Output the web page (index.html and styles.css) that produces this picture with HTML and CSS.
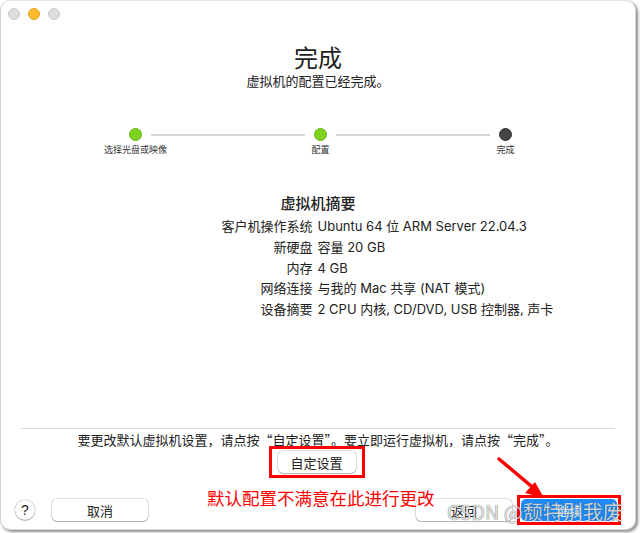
FILE: index.html
```html
<!DOCTYPE html>
<html lang="zh-CN">
<head>
    <meta charset="UTF-8" />
    <meta name="viewport" content="width=device-width, initial-scale=1.0" />
    <title>完成 - 虚拟机助理</title>
    <link rel="stylesheet" href="styles.css">
</head>
<body>
    <div class="window">
        <div class="titlebar">
            <span class="light"></span>
            <span class="light light-min"></span>
            <span class="light"></span>
        </div>

        <div class="header">
            <h1>完成</h1>
            <p>虚拟机的配置已经完成。</p>
        </div>

        <div class="steps">
            <span class="dot done"></span>
            <span class="line"></span>
            <span class="dot done"></span>
            <span class="line"></span>
            <span class="dot current"></span>
            <span class="step-label">选择光盘或映像</span>
            <span></span>
            <span class="step-label">配置</span>
            <span></span>
            <span class="step-label">完成</span>
        </div>

        <div class="summary">
            <h2>虚拟机摘要</h2>
            <dl>
                <dt>客户机操作系统</dt>
                <dd>Ubuntu 64 位 ARM Server 22.04.3</dd>
                <dt>新硬盘</dt>
                <dd>容量 20 GB</dd>
                <dt>内存</dt>
                <dd>4 GB</dd>
                <dt>网络连接</dt>
                <dd>与我的 Mac 共享 (NAT 模式)</dd>
                <dt>设备摘要</dt>
                <dd>2 CPU 内核, CD/DVD, USB 控制器, 声卡</dd>
            </dl>
        </div>

        <div class="footer">
            <p class="hint">要更改默认虚拟机设置，请点按“自定设置”。要立即运行虚拟机，请点按“完成”。</p>
            <div class="custom-row">
                <span class="mark">
                    <button class="btn btn-custom">自定设置</button>
                </span>
            </div>
            <div class="actions">
                <button class="help">?</button>
                <button class="btn btn-wide">取消</button>
                <span class="spacer"></span>
                <button class="btn btn-wide">返回</button>
                <span class="mark mark-primary">
                    <button class="btn btn-primary">继续</button>
                </span>
            </div>
        </div>

        <!-- annotations drawn over the screenshot -->
        <span class="note">默认配置不满意在此进行更改</span>
        <svg class="arrow" width="60" height="50" viewBox="0 0 60 50">
            <line x1="2" y1="2" x2="40" y2="34" stroke="#f00" stroke-width="3.5" stroke-linecap="round" />
            <polygon points="47,41 28,36 38,25" fill="#f00" />
        </svg>
        <span class="watermark">CSDN @颓特别我废</span>
    </div>
</body>
</html>
```

FILE: styles.css
```css
* {
    margin: 0;
    padding: 0;
    box-sizing: border-box;
}

body {
    background-color: #fff;
    font-family: "Liberation Sans", "Noto Sans CJK SC", sans-serif;
    color: #222;
    width: 640px;
    height: 533px;
}

.window {
    position: relative;
    width: 636px;
    height: 530px;
    background-color: #fff;
    border: 1px solid #d4d4d4;
    border-top-color: #e2e2e2;
    border-radius: 10px;
    box-shadow: 2px 2px 3px rgba(0, 0, 0, 0.45);
    display: flex;
    flex-direction: column;
}

.titlebar {
    display: flex;
    gap: 8px;
    padding: 7px 0 0 7px;
    height: 28px;
}

.light {
    width: 12px;
    height: 12px;
    border-radius: 50%;
    background-color: #dedede;
    border: 1px solid #cacaca;
}

.light-min {
    background-color: #fdbc2e;
    border-color: #e3a12a;
}

.header {
    text-align: center;
}

h1 {
    font-family: "Noto Sans CJK SC", sans-serif;
    font-size: 24px;
    font-weight: 400;
    line-height: 28px;
    margin-top: 14px;
    color: #1e1e1e;
}

.header p {
    font-family: "Noto Sans CJK SC", sans-serif;
    font-size: 13px;
    line-height: 20px;
    margin-top: 0;
}

.steps {
    display: grid;
    grid-template-columns: 13px 1fr 13px 1fr 13px;
    grid-template-rows: 13px auto;
    align-items: center;
    width: 383px;
    margin: 37px 0 0 128px;
}

.dot {
    width: 13px;
    height: 13px;
    border-radius: 50%;
}

.done {
    background-color: #7ed321;
    border: 1px solid #6ab31a;
}

.current {
    background-color: #454545;
    border: 1px solid #333;
}

.line {
    height: 2px;
    margin: 0 9px;
    background-color: #d4d4d4;
}

.step-label {
    justify-self: center;
    white-space: nowrap;
    font-family: "Noto Sans CJK SC", sans-serif;
    font-size: 9px;
    line-height: 12px;
    margin-top: 3px;
    color: #333;
}

.summary {
    margin-top: 37px;
}

h2 {
    text-align: center;
    font-family: "Noto Sans CJK SC", sans-serif;
    font-size: 15px;
    font-weight: 500;
    line-height: 20px;
    color: #222;
}

dl {
    display: grid;
    grid-template-columns: 1fr 1fr;
    column-gap: 5px;
    padding-right: 6px;
    margin-top: 3px;
    font-family: "Inter", "Noto Sans CJK SC", sans-serif;
    font-size: 13px;
    line-height: 20.8px;
}

dt {
    text-align: right;
}

.footer {
    margin: auto 20px 0;
    border-top: 1px solid #dcdcdc;
    padding-bottom: 4px;
}

.hint {
    text-align: center;
    font-family: "Noto Sans CJK SC", sans-serif;
    font-size: 13px;
    line-height: 18px;
    margin-top: 2px;
}

.custom-row {
    display: flex;
    justify-content: center;
    margin-top: -3px;
    margin-left: -3px;
}

.mark {
    display: inline-flex;
    padding: 2px 6px;
    border: 3px solid #f00;
}

.btn {
    font-family: "Noto Sans CJK SC", sans-serif;
    font-size: 13px;
    color: #222;
    background-color: #fff;
    border: none;
    border-radius: 5px;
    height: 22px;
    box-shadow: 0 0 0 0.5px rgba(0, 0, 0, 0.25), 0 1px 1px rgba(0, 0, 0, 0.2);
}

.btn-custom {
    width: 78px;
}

.actions {
    display: flex;
    align-items: center;
    margin-top: 17px;
    margin-left: -6px;
    margin-right: -6px;
}

.help {
    width: 20px;
    height: 20px;
    border-radius: 50%;
    border: none;
    background-color: #fff;
    font-family: "Liberation Sans", sans-serif;
    font-size: 14px;
    color: #222;
    box-shadow: 0 0 0 0.5px rgba(0, 0, 0, 0.25), 0 1px 1px rgba(0, 0, 0, 0.2);
    margin-right: 17px;
}

.btn-wide {
    width: 96px;
}

.spacer {
    flex: 1;
}

.mark-primary {
    padding: 1px;
    margin-left: 5px;
}

.btn-primary {
    width: 96px;
    color: #fff;
    background-color: #1e8bf8;
    box-shadow: none;
}

.note {
    position: absolute;
    left: 206px;
    top: 485px;
    font-family: "Noto Sans CJK SC", sans-serif;
    font-size: 17.5px;
    line-height: 24px;
    color: #f00;
}

.arrow {
    position: absolute;
    left: 496px;
    top: 456px;
}

.watermark {
    position: absolute;
    left: 446px;
    top: 497px;
    font-family: "Noto Sans CJK SC", sans-serif;
    font-size: 20px;
    line-height: 28px;
    color: rgba(255, 255, 255, 0.8);
    text-shadow: 0 0 1px rgba(0, 0, 0, 0.75);
}
```
